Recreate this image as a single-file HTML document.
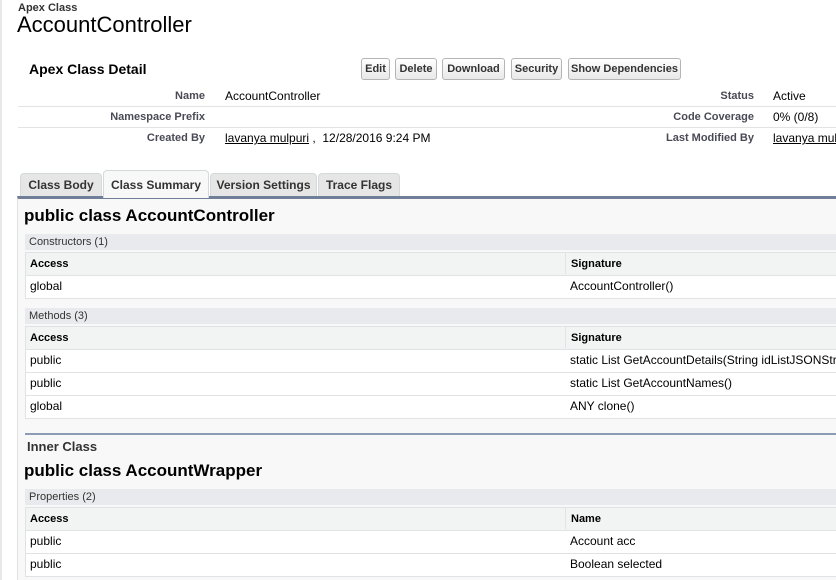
<!DOCTYPE html>
<html><head><style>
*{margin:0;padding:0;box-sizing:border-box}
body{width:836px;height:580px;overflow:hidden;background:#fff;font-family:"Liberation Sans",Arial,sans-serif;font-size:12px;color:#000;position:relative}
.a{position:absolute;white-space:nowrap}
.btn{position:absolute;top:58px;height:22px;border:1px solid #b5b5b5;border-radius:3px;background:linear-gradient(#fff,#e8e8e8);font-size:11px;font-weight:bold;color:#333;text-align:center;line-height:21px}
.lbl{position:absolute;font-weight:bold;color:#4a4a56;font-size:11px;text-align:right;white-space:nowrap}
.val{position:absolute;font-size:12px;white-space:nowrap}
.hr{position:absolute;left:18px;right:0;height:1px;background:#e3e3e3}
.tab{position:absolute;top:173px;height:24px;border:1px solid #d4dadc;border-bottom:none;border-radius:4px 4px 0 0;background:#e6e6e6;font-size:12px;font-weight:bold;color:#333;text-align:center;line-height:23px}
.band{position:absolute;left:25px;right:0;height:16px;background:#e9eaee;font-size:11px;color:#333;padding-left:4px;line-height:17px}
.tbl{position:absolute;left:25px;right:0;border:1px solid #e0e3e5;border-right:none;background:#fff}
.tr{height:23px;border-top:1px solid #e0e3e5;position:relative;font-size:12px;line-height:21px;white-space:nowrap}
.tr:first-child{border-top:none}
.th{background:#f2f3f3;font-weight:bold;font-size:11px;height:22px;line-height:23px}
.c1{position:absolute;left:4px;white-space:nowrap}
.c2{position:absolute;left:544px;white-space:nowrap}
.th .c2{border-left:1px solid #e0e3e5;left:539px;padding-left:5px;height:21px}
</style></head><body>
<div class="a" style="left:0;top:0;width:2px;height:580px;background:#e8e8e8"></div>
<div class="a" style="left:18px;top:2px;font-size:11px;font-weight:bold;color:#333">Apex Class</div>
<div class="a" style="left:17px;top:12px;font-size:22px;color:#000">AccountController</div>
<div class="a" style="left:29px;top:61px;font-size:14px;font-weight:bold">Apex Class Detail</div>
<div class="btn" style="left:361px;width:29px">Edit</div>
<div class="btn" style="left:395px;width:42px">Delete</div>
<div class="btn" style="left:442px;width:63px">Download</div>
<div class="btn" style="left:511px;width:51px">Security</div>
<div class="btn" style="left:568px;width:113px">Show Dependencies</div>
<div class="lbl" style="right:631px;top:90px">Name</div>
<div class="val" style="left:225px;top:89px">AccountController</div>
<div class="lbl" style="right:82px;top:90px">Status</div>
<div class="val" style="left:773px;top:89px">Active</div>
<div class="hr" style="top:106px"></div>
<div class="lbl" style="right:631px;top:111px">Namespace Prefix</div>
<div class="lbl" style="right:82px;top:111px">Code Coverage</div>
<div class="val" style="left:773px;top:110px">0% (0/8)</div>
<div class="hr" style="top:127px"></div>
<div class="lbl" style="right:631px;top:132px">Created By</div>
<div class="val" style="left:225px;top:131px"><u>lavanya mulpuri</u> ,&nbsp; 12/28/2016 9:24 PM</div>
<div class="lbl" style="right:82px;top:132px">Last Modified By</div>
<div class="val" style="left:773px;top:131px"><u>lavanya mulpuri</u></div>

<div class="tab" style="left:20px;width:82px">Class Body</div>
<div class="tab" style="left:103px;width:106px;top:170px;height:28px;background:#f8f8f8;line-height:29px;z-index:2">Class Summary</div>
<div class="tab" style="left:210px;width:107px">Version Settings</div>
<div class="tab" style="left:318px;width:82px">Trace Flags</div>
<div class="a" style="left:17px;top:196px;right:0;height:384px;background:#f8f8f8;border-top:3px solid #717e97;border-left:1px solid #e0e0e0"></div>

<div class="a" style="left:24px;top:206px;font-size:17px;font-weight:bold">public class AccountController</div>
<div class="band" style="top:234px">Constructors (1)</div>
<div class="tbl" style="top:252px">
<div class="tr th"><span class="c1">Access</span><span class="c2">Signature</span></div>
<div class="tr"><span class="c1">global</span><span class="c2">AccountController()</span></div>
</div>
<div class="band" style="top:308px">Methods (3)</div>
<div class="tbl" style="top:326px">
<div class="tr th"><span class="c1">Access</span><span class="c2">Signature</span></div>
<div class="tr"><span class="c1">public</span><span class="c2">static List GetAccountDetails(String idListJSONStr)</span></div>
<div class="tr"><span class="c1">public</span><span class="c2">static List GetAccountNames()</span></div>
<div class="tr"><span class="c1">global</span><span class="c2">ANY clone()</span></div>
</div>
<div class="a" style="left:25px;right:0;top:433px;height:2px;background:#8e9bb4"></div>
<div class="a" style="left:27px;top:439px;font-size:13px;font-weight:bold;color:#333">Inner Class</div>
<div class="a" style="left:24px;top:461px;font-size:17px;font-weight:bold">public class AccountWrapper</div>
<div class="band" style="top:489px">Properties (2)</div>
<div class="tbl" style="top:507px">
<div class="tr th"><span class="c1">Access</span><span class="c2">Name</span></div>
<div class="tr"><span class="c1">public</span><span class="c2">Account acc</span></div>
<div class="tr"><span class="c1">public</span><span class="c2">Boolean selected</span></div>
</div>
</body></html>
